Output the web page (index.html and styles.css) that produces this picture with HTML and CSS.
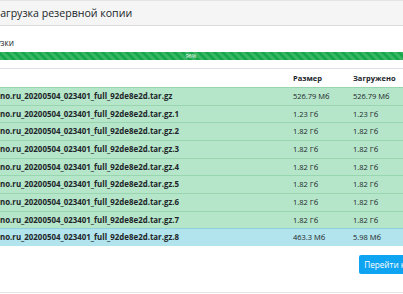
FILE: index.html
```html
<!DOCTYPE html>
<html lang="ru">
<head>
<meta charset="utf-8">
<title>Загрузка резервной копии</title>
<link rel="stylesheet" href="styles.css">
</head>
<body>
<div class="modal">
  <div class="modal-header"><h5 class="title">Загрузка резервной копии</h5></div>
  <div class="modal-body">
    <div class="status"><span>Статус загрузки</span></div>
    <div class="progress"><div class="progress-bar" style="width:96%">96%</div></div>
    <table class="files">
      <colgroup><col class="c-name"><col class="c-size"><col class="c-done"></colgroup>
      <thead><tr><th></th><th>Размер</th><th>Загружено</th></tr></thead>
      <tbody>
        <tr class="ok"><td>no.ru_20200504_023401_full_92de8e2d.tar.gz</td><td>526.79 Мб</td><td>526.79 Мб</td></tr>
        <tr class="ok"><td>no.ru_20200504_023401_full_92de8e2d.tar.gz.1</td><td>1.23 Гб</td><td>1.23 Гб</td></tr>
        <tr class="ok"><td>no.ru_20200504_023401_full_92de8e2d.tar.gz.2</td><td>1.82 Гб</td><td>1.82 Гб</td></tr>
        <tr class="ok"><td>no.ru_20200504_023401_full_92de8e2d.tar.gz.3</td><td>1.82 Гб</td><td>1.82 Гб</td></tr>
        <tr class="ok"><td>no.ru_20200504_023401_full_92de8e2d.tar.gz.4</td><td>1.82 Гб</td><td>1.82 Гб</td></tr>
        <tr class="ok"><td>no.ru_20200504_023401_full_92de8e2d.tar.gz.5</td><td>1.82 Гб</td><td>1.82 Гб</td></tr>
        <tr class="ok"><td>no.ru_20200504_023401_full_92de8e2d.tar.gz.6</td><td>1.82 Гб</td><td>1.82 Гб</td></tr>
        <tr class="ok"><td>no.ru_20200504_023401_full_92de8e2d.tar.gz.7</td><td>1.82 Гб</td><td>1.82 Гб</td></tr>
        <tr class="info"><td>no.ru_20200504_023401_full_92de8e2d.tar.gz.8</td><td>463.3 Мб</td><td>5.98 Мб</td></tr>
      </tbody>
    </table>
    <div class="actions"><button class="btn" type="button">Перейти к загрузкам</button></div>
  </div>
  <div class="modal-footer"></div>
</div>
</body>
</html>
```
FILE: styles.css
```css
html, body {
  margin: 0;
  overflow: hidden;
  background: #fff;
}
body {
  font-family: "Open Sans", "Noto Sans", sans-serif;
  color: #212529;
}
.modal {
  margin-left: -40px;
  width: 498px;
}
.modal-header {
  border-top: 1px solid #e4e4e4;
  border-bottom: 1px solid #dcdcdc;
  background: #f5f5f5;
  height: 24px;
  padding-left: 34px;
}
.title {
  margin: 0;
  font-size: 10.6px;
  font-weight: 400;
  line-height: 25px;
  white-space: nowrap;
}
.modal-body {
  padding: 11px 0 18px;
}
.status {
  display: flex;
  justify-content: flex-end;
  width: 54px;
  font-size: 8.2px;
  line-height: 12px;
  white-space: nowrap;
}
.progress {
  margin-top: 3px;
  margin-right: 17px;
  height: 8px;
  background: #e9ecef;
  display: flex;
}
.progress-bar {
  background-color: #17a84b;
  background-image: linear-gradient(45deg, rgba(255,255,255,.15) 25%, transparent 25%, transparent 50%, rgba(255,255,255,.15) 50%, rgba(255,255,255,.15) 75%, transparent 75%, transparent);
  background-size: 8px 8px;
  color: #fff;
  font-size: 5.5px;
  line-height: 8px;
  text-align: center;
}
.files {
  margin-top: 8px;
  width: 100%;
  border-collapse: separate;
  border-spacing: 0;
  table-layout: fixed;
  font-size: 7.5px;
}
.c-name { width: 330px; }
.c-size { width: 60px; }
.files th {
  border-top: 1px solid #dee2e6;
  text-align: left;
  font-weight: 700;
  padding: 0 0 0 3px;
  height: 18px;
  line-height: 18px;
  white-space: nowrap;
}
.files td {
  border-top: 1px solid #97d6af;
  padding: 3px 0 3px 3px;
  line-height: 10.65px;
  white-space: nowrap;
  overflow: hidden;
}
.files td:first-child {
  padding-left: 40px;
  font-weight: 700;
  font-size: 7.9px;
}
.ok td { background: #b5e6c9; }
.info td { background: #b1e4ec; border-top-color: #8fd2dc; }
.actions {
  display: flex;
  justify-content: flex-end;
  margin-top: 9px;
  padding-right: 6px;
}
.btn {
  background: #0fa4f2;
  color: #fff;
  border: 0;
  border-radius: 2px;
  font-family: "Open Sans", "Noto Sans", sans-serif;
  font-size: 8.2px;
  height: 19px;
  padding: 0 5px;
  white-space: nowrap;
}
.modal-footer {
  border-top: 1px solid #e5e5e5;
  height: 20px;
}
```
